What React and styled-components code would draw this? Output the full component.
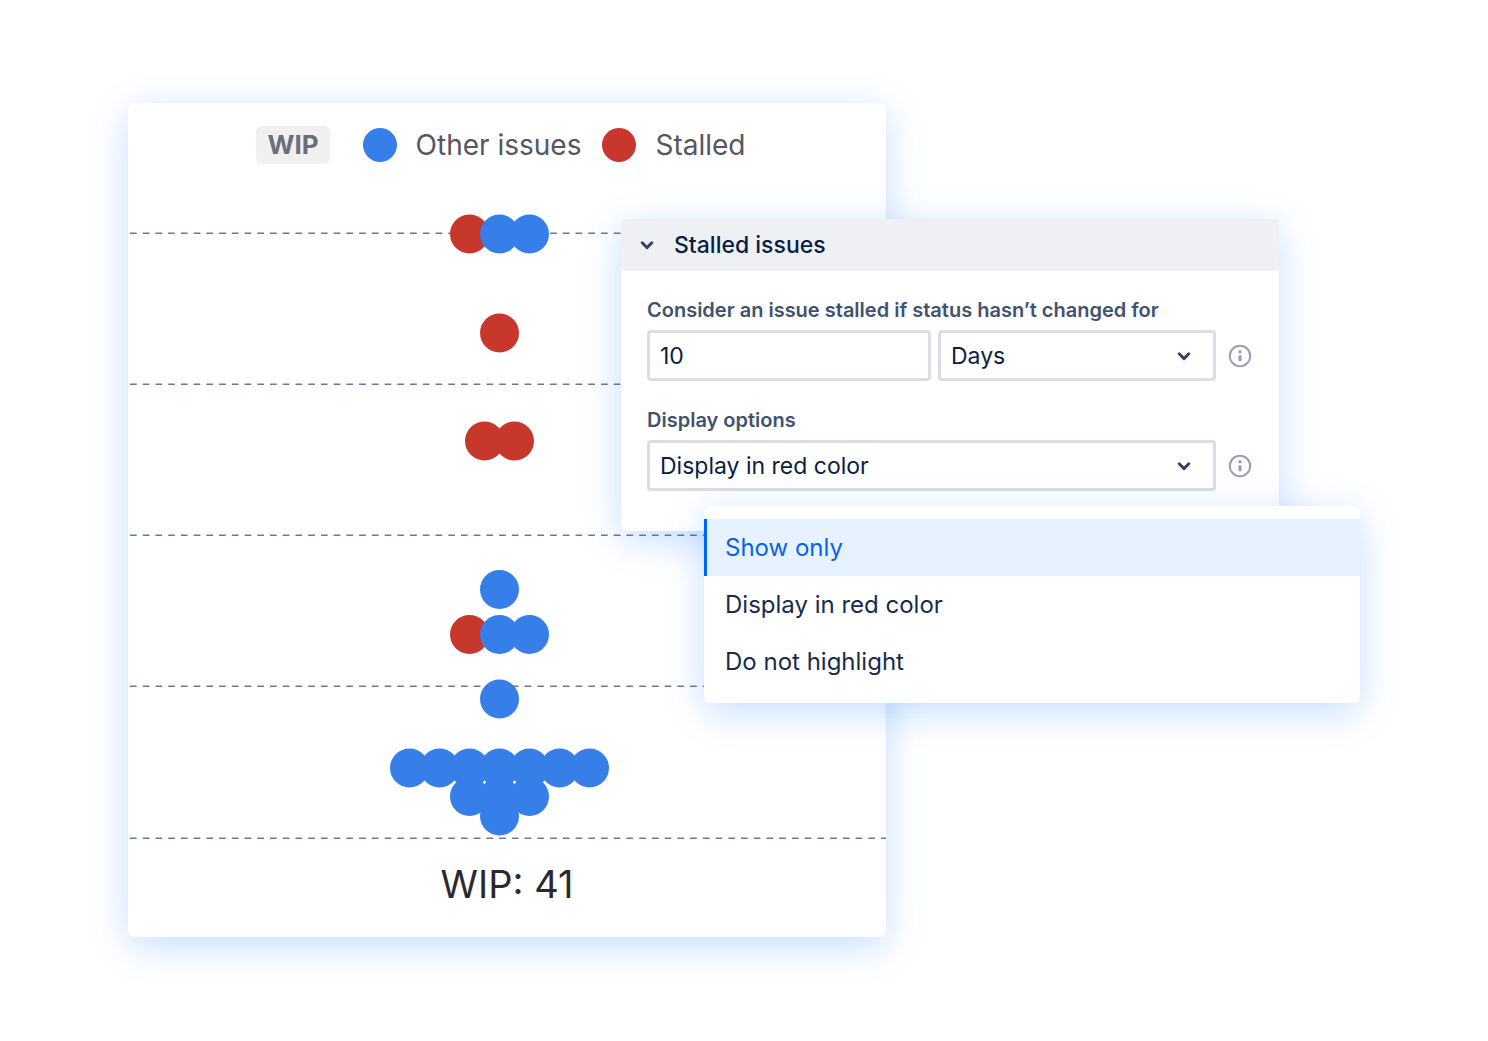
import { useState } from "react";
import styled, { createGlobalStyle } from "styled-components";

const BLUE = '#377fe8';
const RED = '#c8372b';

const lines = [69, 220, 371, 522, 674];

// x is counted in columns from the middle of the chart
const dots = [
  { x: -1, y: 70, color: RED },
  { x: 0, y: 70, color: BLUE },
  { x: 1, y: 70, color: BLUE },
  { x: 0, y: 169, color: RED },
  { x: -0.5, y: 277, color: RED },
  { x: 0.5, y: 277, color: RED },
  { x: 0, y: 425.5, color: BLUE },
  { x: -1, y: 470.5, color: RED },
  { x: 0, y: 470.5, color: BLUE },
  { x: 1, y: 470.5, color: BLUE },
  { x: 0, y: 535, color: BLUE },
  ...[-3, -2, -1, 0, 1, 2, 3].map((x) => ({ x, y: 604, color: BLUE })),
  ...[-1, 0, 1].map((x) => ({ x, y: 632.5, color: BLUE })),
  { x: 0, y: 652, color: BLUE },
];

const displayOptions = ['Show only', 'Display in red color', 'Do not highlight'];

const Chevron = () => (
  <svg width="14" height="10" viewBox="0 0 14 10" fill="none" aria-hidden="true">
    <path d="M2.2 2.8L7 7.6L11.8 2.8" stroke="currentColor" strokeWidth="3" strokeLinecap="round" strokeLinejoin="round" />
  </svg>
)

const InfoIcon = () => (
  <svg width="24" height="24" viewBox="0 0 24 24" fill="none" aria-hidden="true">
    <circle cx="12" cy="12" r="10.2" stroke="currentColor" strokeWidth="2" />
    <circle cx="12" cy="7.8" r="1.7" fill="currentColor" />
    <path d="M12 12.6V15.8" stroke="currentColor" strokeWidth="3.2" strokeLinecap="round" />
  </svg>
)

const Chart = () => (
  <ChartSvg viewBox="0 0 758 686" role="img" aria-label="Issues in progress">
    {lines.map((y) => (
      <line key={y} x1="2" x2="758" y1={y + 0.3} y2={y + 0.3} stroke="#6b7893" strokeWidth="1.5" strokeDasharray="6.7 6.03" />
    ))}
    {dots.map((d, i) => (
      <circle key={i} cx={371.5 + d.x * 30} cy={d.y} r="19.5" fill={d.color} />
    ))}
  </ChartSvg>
)

const App = () => {
  const [open, setOpen] = useState(true);
  const [amount, setAmount] = useState('10');
  const [unit, setUnit] = useState('Days');
  const [display, setDisplay] = useState('Display in red color');
  const [active, setActive] = useState('Show only');

  return (
    <>
      <GlobalStyle />
      <Page>
        <Card>
          <Legend>
            <Badge>WIP</Badge>
            <LegendItem color={BLUE}>Other issues</LegendItem>
            <LegendItem color={RED}>Stalled</LegendItem>
          </Legend>
          <Chart />
          <Total>WIP: 41</Total>
        </Card>

        <Panel>
          <PanelHeader type="button" aria-expanded={open} onClick={() => setOpen(!open)}>
            <Chevron />
            Stalled issues
          </PanelHeader>
          {open && (
            <Form>
              <Field>
                <Label htmlFor="amount">Consider an issue stalled if status hasn’t changed for</Label>
                <Row>
                  <Controls>
                    <Input id="amount" value={amount} onChange={(e) => setAmount(e.target.value)} />
                    <SelectWrap>
                      <Select aria-label="Unit" value={unit} onChange={(e) => setUnit(e.target.value)}>
                        <option>Days</option>
                        <option>Hours</option>
                      </Select>
                      <Chevron />
                    </SelectWrap>
                  </Controls>
                  <InfoButton type="button" aria-label="About stalled issues"><InfoIcon /></InfoButton>
                </Row>
              </Field>
              <Field>
                <Label htmlFor="display">Display options</Label>
                <Row>
                  <SelectWrap>
                    <Select id="display" value={display} onChange={(e) => setDisplay(e.target.value)}>
                      {displayOptions.map((o) => <option key={o}>{o}</option>)}
                    </Select>
                    <Chevron />
                  </SelectWrap>
                  <InfoButton type="button" aria-label="About display options"><InfoIcon /></InfoButton>
                </Row>
              </Field>
              <Menu role="listbox" aria-label="Display options">
                {displayOptions.map((o) => (
                  <MenuItem
                    key={o}
                    type="button"
                    role="option"
                    aria-selected={o === display}
                    $active={o === active}
                    onMouseEnter={() => setActive(o)}
                    onClick={() => setDisplay(o)}
                  >
                    {o}
                  </MenuItem>
                ))}
              </Menu>
            </Form>
          )}
        </Panel>
      </Page>
    </>
  )
}

const GlobalStyle = createGlobalStyle`
  * {
    box-sizing: border-box;
  }
  body {
    margin: 0;
    background-color: #ffffff;
    font-family: Inter, "Liberation Sans", sans-serif;
    color: #172b4d;
  }
  button, input, select {
    font-family: inherit;
    color: inherit;
  }
`

const Surface = styled.section`
  background-color: #ffffff;
  border-radius: 6px;
  box-shadow: 0 9px 38px rgba(0, 112, 255, 0.23);
`

/* the panel shares the second column with the card, so it overlaps it */
const Page = styled.main`
  display: grid;
  grid-template-columns: 493fr 265fr 393fr 81fr;
  align-items: start;
  padding: 103px 128px;
`

const Card = styled(Surface)`
  grid-column: 1 / 3;
  grid-row: 1;
  padding: 23px 0 29px;
`

const Legend = styled.div`
  display: flex;
  justify-content: center;
  align-items: center;
  gap: 21px;
  padding-right: 12px;
`

const Badge = styled.span`
  margin-right: 12px;
  padding: 0 11px;
  border-radius: 6px;
  background-color: #f0f0f0;
  color: #6c6e79;
  font-size: 26px;
  font-weight: 700;
  line-height: 38px;
`

const LegendItem = styled.span`
  display: flex;
  align-items: center;
  gap: 19px;
  color: #55565f;
  font-size: 28px;
  line-height: 38px;
  &::before {
    content: '';
    width: 34px;
    height: 34px;
    border-radius: 50%;
    background-color: ${(props) => props.color};
  }
`

const ChartSvg = styled.svg`
  display: block;
  width: 100%;
  height: auto;
`

const Total = styled.div`
  padding-top: 10px;
  color: #2a2a2e;
  font-size: 38px;
  line-height: 48px;
  text-align: center;
`

const Panel = styled(Surface)`
  position: relative;
  grid-column: 2 / 4;
  grid-row: 1;
  margin-top: 116px;
`

const PanelHeader = styled.button`
  display: flex;
  align-items: center;
  gap: 20px;
  width: 100%;
  height: 52px;
  padding: 0 19px;
  border: none;
  border-radius: 5px;
  background-color: #eff0f4;
  color: #091e42;
  font-size: 23px;
  font-weight: 500;
  cursor: pointer;
  svg {
    color: #344563;
  }
`

const Form = styled.form`
  display: flex;
  flex-direction: column;
  gap: 27px;
  padding: 27px 26px 40px;
`

const Field = styled.div`
  display: flex;
  flex-direction: column;
  gap: 8px;
`

const Label = styled.label`
  color: #42526e;
  font-size: 20px;
  font-weight: 600;
  line-height: 24px;
`

const Row = styled.div`
  display: grid;
  grid-template-columns: 1fr 26px;
  align-items: center;
  gap: 11px;
`

const Controls = styled.div`
  display: grid;
  grid-template-columns: 284fr 278fr;
  gap: 7px;
`

const Input = styled.input`
  width: 100%;
  min-width: 0;
  height: 51px;
  padding: 0 10px;
  border: solid #dadde4 3px;
  border-radius: 4px;
  background-color: #ffffff;
  color: #091e42;
  font-size: 23px;
`

const SelectWrap = styled.div`
  display: grid;
  align-items: center;
  > * {
    grid-area: 1 / 1;
  }
  svg {
    justify-self: end;
    margin-right: 25px;
    color: #344563;
    pointer-events: none;
  }
`

const Select = styled(Input).attrs({ as: 'select' })`
  appearance: none;
`

const InfoButton = styled.button`
  display: flex;
  justify-content: center;
  padding: 0;
  border: none;
  background: none;
  color: #97a0b1;
  cursor: pointer;
`

const Menu = styled.div`
  position: absolute;
  top: 287px;
  left: 83px;
  right: -81px;
  padding: 13px 0;
  border-radius: 6px;
  background-color: #ffffff;
  box-shadow: 0 9px 38px rgba(0, 112, 255, 0.23);
`

const MenuItem = styled.button`
  display: block;
  width: 100%;
  height: 57px;
  padding: 0 18px;
  border: none;
  border-left: solid 3px ${(props) => props.$active ? '#0065ff' : 'transparent'};
  background-color: ${(props) => props.$active ? '#e7f2ff' : 'transparent'};
  color: ${(props) => props.$active ? '#0a62e8' : '#172b4d'};
  font-size: 24px;
  text-align: left;
  cursor: pointer;
`

export default App;
